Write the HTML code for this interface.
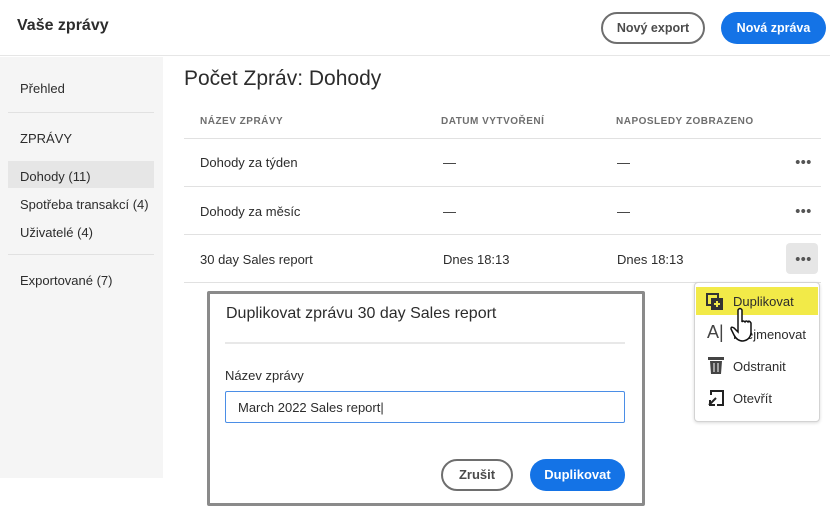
<!DOCTYPE html><html><head><meta charset="utf-8"><style>
*{box-sizing:border-box;margin:0;padding:0}
body{width:830px;height:521px;position:relative;background:#fff;font-family:"Liberation Sans",sans-serif;color:#2c2c2c;overflow:hidden}
.a{position:absolute}
.t{font-size:13px;white-space:nowrap}
.h{font-size:10px;letter-spacing:.5px;color:#6e6e6e;font-weight:bold}
.line{position:absolute;height:1px;background:#e1e1e1}
.dots{position:absolute;width:16px;height:4px;background:radial-gradient(circle,#555 1.8px,transparent 2.2px) 0 0/5.5px 4px repeat-x}
</style></head><body>
<div class="a" style="left:0;top:0;width:830px;height:56px;background:#fff;border-bottom:1px solid #e6e6e6"></div>
<div class="a" style="left:17px;top:17px;font-size:16px;font-weight:bold;color:#2c2c2c">Vaše zprávy</div>
<div class="a" style="left:601px;top:12px;width:104px;height:32px;border:2px solid #6e6e6e;border-radius:16px;font-size:12.5px;font-weight:bold;color:#4b4b4b;text-align:center;line-height:28px">Nový export</div>
<div class="a" style="left:721px;top:12px;width:105px;height:32px;background:#1473e6;border-radius:16px;font-size:12.5px;font-weight:bold;color:#fff;text-align:center;line-height:32px">Nová zpráva</div>
<div class="a" style="left:0;top:57px;width:163px;height:421px;background:#f5f5f5"></div>
<div class="a t" style="left:20px;top:81px">Přehled</div>
<div class="line" style="left:8px;top:112px;width:146px"></div>
<div class="a t" style="left:20px;top:131px">ZPRÁVY</div>
<div class="a" style="left:8px;top:161px;width:146px;height:27px;background:#e6e6e6"></div>
<div class="a t" style="left:20px;top:169px">Dohody (11)</div>
<div class="a t" style="left:20px;top:197px">Spotřeba transakcí (4)</div>
<div class="a t" style="left:20px;top:225px">Uživatelé (4)</div>
<div class="line" style="left:8px;top:254px;width:146px"></div>
<div class="a t" style="left:20px;top:273px">Exportované (7)</div>
<div class="a" style="left:184px;top:67px;font-size:21px;color:#2c2c2c">Počet Zpráv: Dohody</div>
<div class="a h" style="left:200px;top:116px">NÁZEV ZPRÁVY</div>
<div class="a h" style="left:441px;top:116px">DATUM VYTVOŘENÍ</div>
<div class="a h" style="left:616px;top:116px">NAPOSLEDY ZOBRAZENO</div>
<div class="line" style="left:184px;top:138px;width:637px"></div>
<div class="a t" style="left:200px;top:155px">Dohody za týden</div><div class="a t" style="left:443px;top:155px">—</div><div class="a t" style="left:617px;top:155px">—</div><div class="dots" style="left:795px;top:160px"></div>
<div class="line" style="left:184px;top:186px;width:637px"></div>
<div class="a t" style="left:200px;top:204px">Dohody za měsíc</div><div class="a t" style="left:443px;top:204px">—</div><div class="a t" style="left:617px;top:204px">—</div><div class="dots" style="left:795px;top:209px"></div>
<div class="line" style="left:184px;top:234px;width:637px"></div>
<div class="a t" style="left:200px;top:252px">30 day Sales report</div><div class="a t" style="left:443px;top:252px">Dnes 18:13</div><div class="a t" style="left:617px;top:252px">Dnes 18:13</div>
<div class="a" style="left:786px;top:243px;width:32px;height:31px;background:#e6e6e6;border-radius:4px"></div><div class="dots" style="left:795px;top:257px"></div>
<div class="line" style="left:184px;top:282px;width:637px"></div>
<div class="a" style="left:694px;top:282px;width:126px;height:140px;background:#fff;border:1px solid #d3d3d3;border-radius:4px;box-shadow:0 1px 3px rgba(0,0,0,.15)"></div>
<div class="a" style="left:696px;top:287px;width:122px;height:28px;background:#f2ea48"></div>
<svg class="a" style="left:706px;top:293px" width="18" height="18"><rect x="1" y="1" width="11" height="11" fill="none" stroke="#333" stroke-width="2"/><rect x="5" y="5" width="12" height="12" fill="#333"/><path d="M11 8v6M8 11h6" stroke="#f2ea48" stroke-width="2"/></svg>
<div class="a t" style="left:733px;top:294px">Duplikovat</div>
<div class="a" style="left:707px;top:322px;font-size:18px;color:#444">A|</div>
<div class="a t" style="left:733px;top:327px">Přejmenovat</div>
<svg class="a" style="left:708px;top:356px" width="16" height="18"><rect x="0" y="1" width="16" height="3" fill="#444"/><path d="M2 5h12l-1 13H3z" fill="#444"/><path d="M6 7v9M10 7v9" stroke="#fff"/></svg>
<div class="a t" style="left:733px;top:359px">Odstranit</div>
<svg class="a" style="left:707px;top:389px" width="18" height="18"><path d="M4 6V2h12v14h-6" fill="none" stroke="#222" stroke-width="2"/><path d="M2 16l7-7M3 11v5h5" fill="none" stroke="#222" stroke-width="2"/></svg>
<div class="a t" style="left:733px;top:391px">Otevřít</div>
<svg class="a" style="left:730px;top:306px" width="34" height="40"><path d="M8 4q2-3 4 0v12q1-2 3 0 1-2 3 0 1-2 3 1v10q-1 7-8 8-6 0-9-6l-3-6q0-3 3-1l4 4z" fill="#fff" stroke="#111" stroke-width="1.5"/></svg>
<div class="a" style="left:207px;top:291px;width:438px;height:215px;border:3px solid #8a8a8a;background:#fff;border-radius:2px"></div>
<div class="a" style="left:226px;top:305px;font-size:16px;color:#2c2c2c">Duplikovat zprávu 30 day Sales report</div>
<div class="a" style="left:225px;top:342px;width:400px;height:2px;background:#e8e8e8"></div>
<div class="a t" style="left:225px;top:368px">Název zprávy</div>
<div class="a" style="left:225px;top:391px;width:400px;height:32px;border:1px solid #4b8ee6;border-radius:2px"></div>
<div class="a t" style="left:238px;top:400px">March 2022 Sales report|</div>
<div class="a" style="left:441px;top:459px;width:72px;height:32px;border:2px solid #6e6e6e;border-radius:16px;font-size:13px;font-weight:bold;color:#4b4b4b;text-align:center;line-height:28px">Zrušit</div>
<div class="a" style="left:530px;top:459px;width:95px;height:32px;background:#1473e6;border-radius:16px;font-size:13px;font-weight:bold;color:#fff;text-align:center;line-height:32px">Duplikovat</div>
</body></html>
